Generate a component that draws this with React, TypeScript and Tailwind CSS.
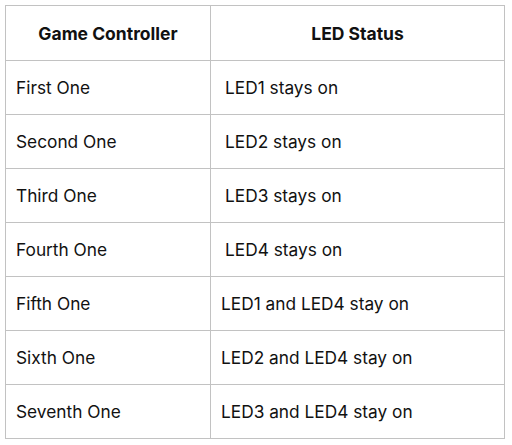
const rows = [
  { name: "First One", status: "LED1 stays on", pad: "pl-[14px]" },
  { name: "Second One", status: "LED2 stays on", pad: "pl-[14px]" },
  { name: "Third One", status: "LED3 stays on", pad: "pl-[14px]" },
  { name: "Fourth One", status: "LED4 stays on", pad: "pl-[14px]" },
  { name: "Fifth One", status: "LED1 and LED4 stay on", pad: "pl-[10px]" },
  { name: "Sixth One", status: "LED2 and LED4 stay on", pad: "pl-[10px]" },
  { name: "Seventh One", status: "LED3 and LED4 stay on", pad: "pl-[10px]" },
];

export default function App() {
  return (
    <div className="w-[512px] h-[445px] bg-white pt-[5px] pl-[5px] font-['Inter',sans-serif] text-[17.3px] text-[#111]">
      <table className="w-[500px] border-collapse table-fixed">
        <thead>
          <tr className="h-[55px]">
            <th className="w-[205px] border border-[#c2c2c2] font-bold text-[17.5px] text-center pt-[2px]">Game Controller</th>
            <th className="border border-[#c2c2c2] font-bold text-[17.5px] text-center pt-[2px]">LED Status</th>
          </tr>
        </thead>
        <tbody>
          {rows.map(r => (
            <tr key={r.name} className="h-[54px]">
              <td className="border border-[#c2c2c2] pl-[10px] pt-[1px]">{r.name}</td>
              <td className={`border border-[#c2c2c2] pt-[1px] ${r.pad}`}>{r.status}</td>
            </tr>
          ))}
        </tbody>
      </table>
    </div>
  );
}
